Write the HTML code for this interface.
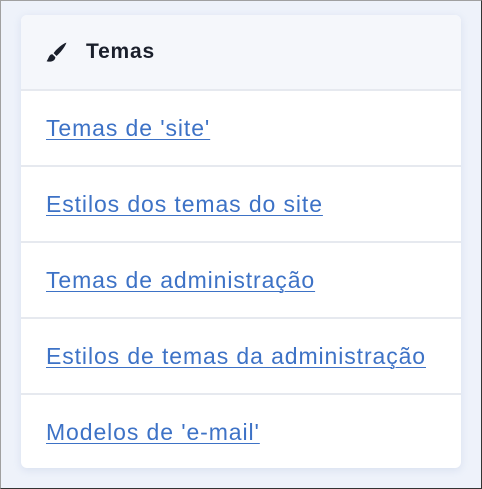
<!DOCTYPE html>
<html><head><style>
html,body{margin:0;padding:0}
body{width:482px;height:489px;box-sizing:border-box;background:#eef2fa;border:1px solid #a0a0a0;border-right-color:#333;border-bottom-color:#333;position:relative;font-family:"Liberation Sans",sans-serif;overflow:hidden}
.card{position:absolute;left:20px;top:14px;width:440px;height:453px;background:#fff;border-radius:6px;box-shadow:0 2px 8px rgba(150,170,210,.25);overflow:hidden}
.hd{height:74px;background:#f5f7fb;border-bottom:2px solid #e6e9ef;display:flex;align-items:center;padding-left:25px;font-weight:bold;font-size:21px;letter-spacing:0.8px;color:#1a1f2b}
.hd svg{margin-right:19px}
.row{height:74px;border-bottom:2px solid #e6e9ef;display:flex;align-items:center;padding-left:25px}
.row:last-child{border-bottom:none}
.row a{color:#3d72c6;font-size:23px;letter-spacing:0.9px;text-decoration:underline;text-decoration-thickness:1px;text-underline-offset:3px}
</style></head><body>
<div class="card">
<div class="hd"><svg width="21" height="21" viewBox="0 0 18 18"><path d="M17.5 0.5 C14 1.5 8.5 6.5 6.5 9.5 L9 12 C12 9.5 16.5 4 17.5 0.5Z" fill="#1a1f2b"/><path d="M5.5 10.5 C2.5 10.5 2.5 14 0.5 16.5 C4 17.5 8 16.5 8 13Z" fill="#1a1f2b"/></svg>Temas</div>
<div class="row"><a>Temas de 'site'</a></div>
<div class="row"><a>Estilos dos temas do site</a></div>
<div class="row"><a>Temas de administração</a></div>
<div class="row"><a>Estilos de temas da administração</a></div>
<div class="row"><a>Modelos de 'e-mail'</a></div>
</div>
</body></html>
